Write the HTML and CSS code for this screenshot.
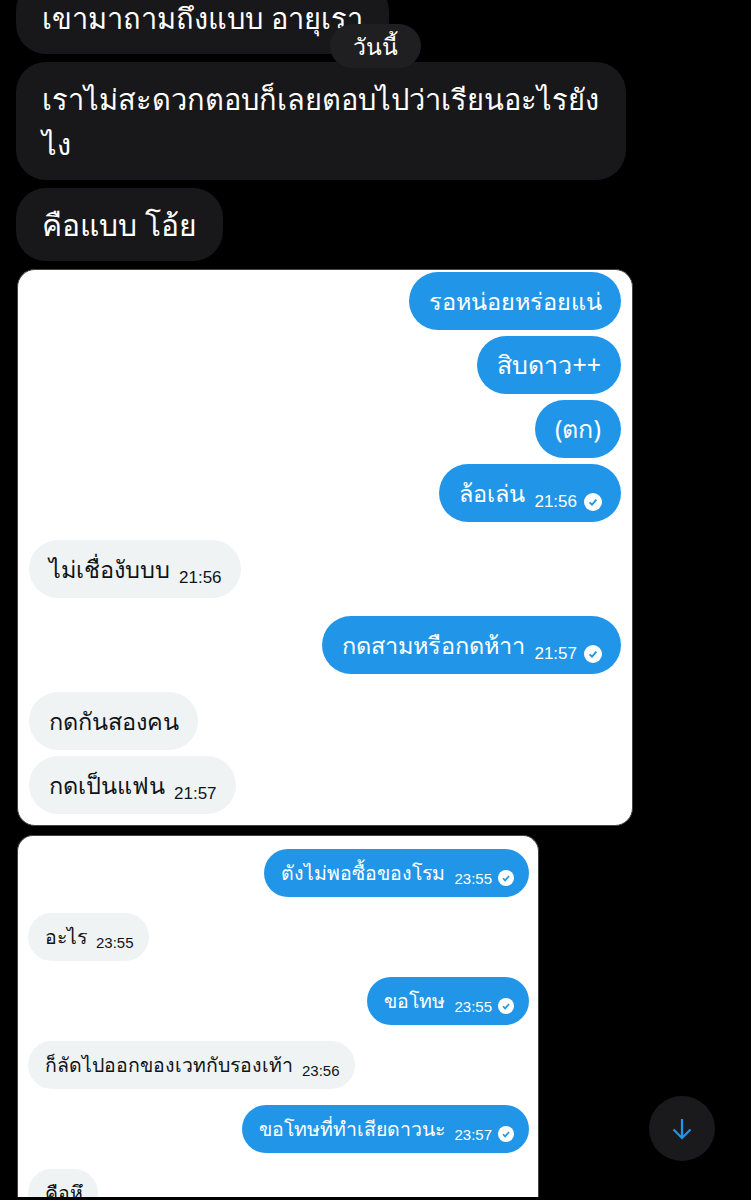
FILE: index.html
```html
<!DOCTYPE html>
<html lang="en">
<head>
  <meta charset="UTF-8">
  <meta name="viewport" content="width=device-width, initial-scale=1.0">
  <title>Chat</title>
  <link rel="stylesheet" href="styles.css">
</head>
<body>
  <svg class="svg-defs" width="0" height="0">
    <symbol id="check" viewBox="0 0 18 18">
      <circle cx="9" cy="9" r="9" fill="#fff"/>
      <path d="M5.6 9.3l2.4 2.4 4.4-5" fill="none" stroke="#2196e8" stroke-width="1.9"/>
    </symbol>
  </svg>

  <div class="page">
    <div class="dark-list">
      <div class="dark-bubble first">เขามาถามถึงแบบ อายุเรา</div>
      <div class="dark-bubble wide">เราไม่สะดวกตอบก็เลยตอบไปว่าเรียนอะไรยัง<br>ไง</div>
      <div class="dark-bubble">คือแบบ โอ้ย</div>
    </div>

    <div class="card card-one">
      <div class="bubble me">รอหน่อยหร่อยแน่</div>
      <div class="bubble me big">สิบดาว++</div>
      <div class="bubble me big">(ตก)</div>
      <div class="bubble me">ล้อเล่น <span class="time">21:56</span><svg class="tick"><use href="#check"/></svg></div>
      <div class="bubble them gap">ไม่เชื่องับบบ <span class="time">21:56</span></div>
      <div class="bubble me gap">กดสามหรือกดห้าา <span class="time">21:57</span><svg class="tick"><use href="#check"/></svg></div>
      <div class="bubble them gap">กดกันสองคน</div>
      <div class="bubble them">กดเป็นแฟน <span class="time">21:57</span></div>
    </div>

    <div class="card card-two">
      <div class="bubble me">ตังไม่พอซื้อของโรม <span class="time">23:55</span><svg class="tick"><use href="#check"/></svg></div>
      <div class="bubble them">อะไร <span class="time">23:55</span></div>
      <div class="bubble me">ขอโทษ <span class="time">23:55</span><svg class="tick"><use href="#check"/></svg></div>
      <div class="bubble them">ก็ลัดไปออกของเวทกับรองเท้า <span class="time">23:56</span></div>
      <div class="bubble me">ขอโทษที่ทำเสียดาวนะ <span class="time">23:57</span><svg class="tick"><use href="#check"/></svg></div>
      <div class="bubble them">คือหึ</div>
    </div>
  </div>

  <div class="date-pill">วันนี้</div>

  <button class="scroll-btn">
    <svg width="24" height="24" viewBox="0 0 24 24"><path d="M12 2v19M3.5 12.5l8.5 8.5 8.5-8.5" fill="none" stroke="#2196e8" stroke-width="2.2"/></svg>
  </button>
</body>
</html>
```

FILE: styles.css
```css
html, body {
  margin: 0;
  padding: 0;
  background: #000;
  height: 1200px;
  overflow: hidden;
}

body {
  font-family: "Noto Sans", "Liberation Sans", sans-serif;
  position: relative;
}

.svg-defs {
  display: none;
}

.page {
  padding-left: 16px;
  display: flex;
  flex-direction: column;
  align-items: flex-start;
}

.dark-list {
  display: flex;
  flex-direction: column;
  align-items: flex-start;
  gap: 8px;
  margin-top: -19px;
  width: 610px;
  margin-bottom: 8px;
}

.dark-bubble {
  background: #18181a;
  color: #fff;
  font-size: 30px;
  line-height: 45px;
  padding: 14px 26px;
  border-radius: 30px;
}

.dark-bubble.first {
  font-size: 29px;
}

.dark-bubble.wide {
  box-sizing: border-box;
  width: 610px;
  white-space: nowrap;
  font-size: 29px;
}

.card {
  background: #fff;
  box-sizing: border-box;
  display: flex;
  flex-direction: column;
  align-items: flex-start;
  margin-left: 1px;
  border: 1px solid #444;
}

.card-one {
  width: 616px;
  height: 557px;
  border-radius: 18px;
  padding: 2px 11px 0 11px;
  gap: 6px;
  font-size: 23.5px;
}

.card-two {
  width: 522px;
  height: 362px;
  border-radius: 16px 16px 0 0;
  border-bottom: none;
  margin-top: 9px;
  padding: 13px 9px 0 10px;
  gap: 16px;
  font-size: 19.5px;
  overflow: hidden;
}

.bubble {
  border-radius: 29px;
  white-space: nowrap;
  display: flex;
  align-items: center;
  box-sizing: border-box;
}

.card-one .bubble {
  height: 58px;
  padding: 0 19px 0 20px;
}

.card-one .big {
  font-size: 25px;
  padding-right: 20px;
}

.card-two .bubble {
  height: 48px;
  padding: 0 15px 0 17px;
  border-radius: 24px;
  flex-shrink: 0;
}

.card-one .gap {
  margin-top: 12px;
}

.me {
  background: #2196e8;
  color: #fff;
  align-self: flex-end;
}

.them {
  background: #eff3f4;
  color: #0f1419;
}

.time {
  font-family: "Liberation Sans", sans-serif;
  margin-left: 9px;
}

.card-one .time {
  font-size: 17px;
  margin-top: 17px;
}

.card-two .time {
  font-size: 15px;
  margin-top: 10px;
}

.tick {
  width: 18px;
  height: 18px;
  margin-left: 7px;
  margin-top: 17px;
}

.card-two .tick {
  width: 16px;
  height: 16px;
  margin-left: 6px;
  margin-top: 10px;
}

.date-pill {
  position: absolute;
  left: 330px;
  top: 24px;
  width: 91px;
  height: 44px;
  border-radius: 22px;
  background: #1f1f21;
  color: #fff;
  font-size: 23px;
  line-height: 44px;
  text-align: center;
}

.scroll-btn {
  position: absolute;
  left: 649px;
  top: 1096px;
  width: 66px;
  height: 65px;
  border-radius: 50%;
  border: none;
  background: #1a1a1c;
  padding: 0;
  display: flex;
  align-items: center;
  justify-content: center;
}
```
